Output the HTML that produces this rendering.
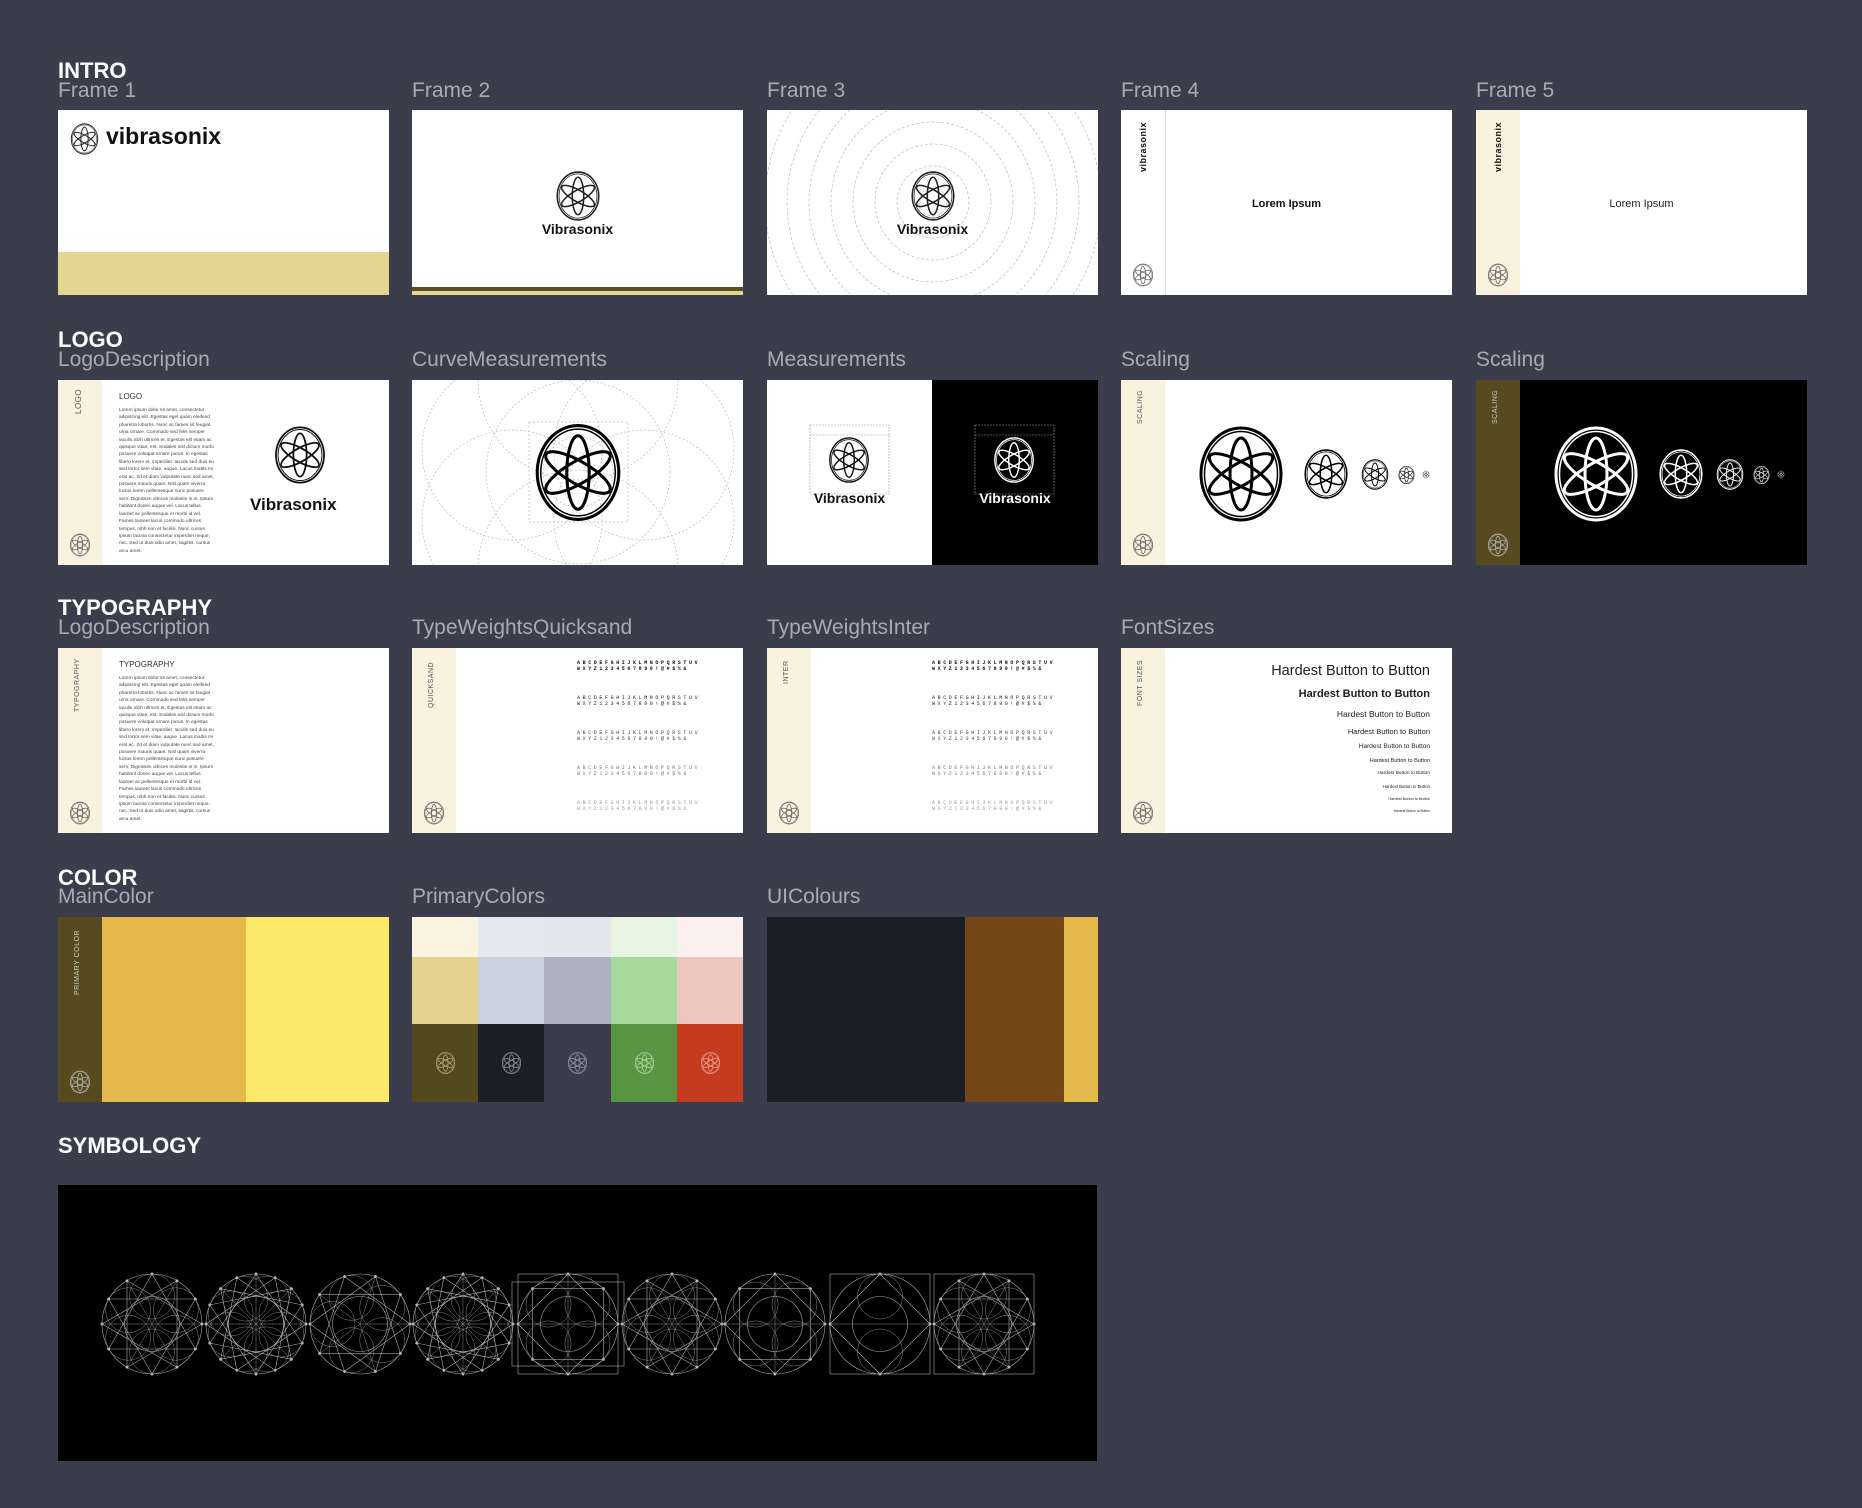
<!DOCTYPE html>
<html><head><meta charset="utf-8">
<style>
*{margin:0;padding:0;box-sizing:border-box}
body{width:1862px;height:1508px;background:#3b3d4c;position:relative;overflow:hidden;font-family:"Liberation Sans",sans-serif}
.t{position:absolute;color:#fff;font-weight:bold;font-size:22px;line-height:22px;left:58px}
.s{position:absolute;color:#a9abb3;font-size:21px;line-height:22px}
.f{position:absolute;width:331px;height:185px;background:#fff;overflow:hidden}
.side{position:absolute;left:0;top:0;width:44px;height:185px;background:#f8f2de}
.vt{position:absolute;transform:rotate(-90deg);transform-origin:left top;font-size:8px;color:#555;white-space:nowrap;letter-spacing:.5px}
.ic{position:absolute}
.para{position:absolute;font-size:4.8px;line-height:7.4px;color:#444;width:96px}
.tw{position:absolute;font-family:"Liberation Mono",monospace;font-size:5px;line-height:6px;letter-spacing:2.6px;color:#333;white-space:nowrap}
.fs{position:absolute;right:22px;white-space:nowrap;color:#222;text-align:right}
</style></head><body>
<svg width="0" height="0" style="position:absolute">
<defs>
<symbol id="lg" viewBox="0 0 100 100">
<g fill="none" stroke="currentColor" stroke-width="3">
<ellipse cx="50" cy="50" rx="40" ry="46"/>
<ellipse cx="50" cy="50" rx="36.5" ry="42.5" stroke-width="1.5"/>
<ellipse cx="50" cy="50" rx="11" ry="36"/>
<ellipse cx="50" cy="50" rx="11" ry="36" transform="rotate(60 50 50)"/>
<ellipse cx="50" cy="50" rx="11" ry="36" transform="rotate(120 50 50)"/>
</g>
</symbol>
</defs>
</svg>

<!-- INTRO -->
<div class="t" style="top:60px">INTRO</div>
<div class="s" style="left:58px;top:80px">Frame 1</div>
<div class="s" style="left:412px;top:80px">Frame 2</div>
<div class="s" style="left:767px;top:80px">Frame 3</div>
<div class="s" style="left:1121px;top:80px">Frame 4</div>
<div class="s" style="left:1476px;top:80px">Frame 5</div>

<div class="f" style="left:58px;top:110px">
<svg class="ic" style="left:10px;top:12px;color:#222" width="33" height="34"><use href="#lg"/></svg>
<div style="position:absolute;left:48px;top:13px;font-size:23px;font-weight:bold;color:#111">vibrasonix</div>
<div style="position:absolute;left:0;bottom:0;width:331px;height:43px;background:#e4d590"></div>
</div>
<div class="f" style="left:412px;top:110px">
<svg class="ic" style="left:140px;top:59px;color:#222" width="52" height="54"><use href="#lg"/></svg>
<div style="position:absolute;left:0;width:331px;top:111px;text-align:center;font-size:14px;font-weight:bold;color:#111">Vibrasonix</div>
<div style="position:absolute;left:0;top:177px;width:331px;height:4px;background:#5a4f23"></div>
<div style="position:absolute;left:0;top:181px;width:331px;height:4px;background:#e4d590"></div>
</div>
<div class="f" style="left:767px;top:110px">
<svg width="331" height="185" style="position:absolute;left:0;top:0"><g fill="none" stroke="#bbb" stroke-width=".7" stroke-dasharray="3 2" id="cc"></g></svg>
<svg class="ic" style="left:140px;top:59px;color:#222" width="52" height="54"><use href="#lg"/></svg>
<div style="position:absolute;left:0;width:331px;top:111px;text-align:center;font-size:14px;font-weight:bold;color:#111">Vibrasonix</div>
</div>
<div class="f" style="left:1121px;top:110px">
<div style="position:absolute;left:44px;top:0;width:1px;height:185px;background:#ddd"></div>
<div class="vt" style="left:17px;top:62px;font-weight:bold;color:#111;font-size:9px">vibrasonix</div>
<svg class="ic" style="left:10px;top:153px;color:#555" width="24" height="24"><use href="#lg"/></svg>
<div style="position:absolute;left:0;width:331px;top:88px;text-align:center;font-size:11px;font-weight:bold;color:#111">Lorem Ipsum</div>
</div>
<div class="f" style="left:1476px;top:110px">
<div class="side"></div>
<div class="vt" style="left:17px;top:62px;font-weight:bold;color:#111;font-size:9px">vibrasonix</div>
<svg class="ic" style="left:10px;top:153px;color:#555" width="24" height="24"><use href="#lg"/></svg>
<div style="position:absolute;left:0;width:331px;top:88px;text-align:center;font-size:11px;color:#222">Lorem Ipsum</div>
</div>

<!-- LOGO -->
<div class="t" style="top:329px">LOGO</div>
<div class="s" style="left:58px;top:349px">LogoDescription</div>
<div class="s" style="left:412px;top:349px">CurveMeasurements</div>
<div class="s" style="left:767px;top:349px">Measurements</div>
<div class="s" style="left:1121px;top:349px">Scaling</div>
<div class="s" style="left:1476px;top:349px">Scaling</div>

<div class="f" style="left:58px;top:380px">
<div class="side"></div>
<div class="vt" style="left:16px;top:34px">LOGO</div>
<svg class="ic" style="left:10px;top:153px;color:#555" width="24" height="24"><use href="#lg"/></svg>
<div style="position:absolute;left:61px;top:12px;font-size:8px;color:#333">LOGO</div>
<div class="para" style="left:61px;top:27px">Lorem ipsum dolor sit amet, consectetur adipiscing elit. Egestas eget quam eleifend pharetra lobortis. Nunc ac fames sit feugiat urna ornare. Commodo sed felis semper iaculis nibh ultrices et. Egestas elit etiam ac quisque vitae, est. Sodales nisl dictum morbi posuere volutpat ornare purus. In egestas libero lorem et, imperdiet. Iaculis sed duis eu sed tortor sem vitae, augue. Lacus mattis mi erat ac. Sit et diam vulputate nunc sed amet, posuere mauris quam. Nisl quam viverra luctus lorem pellentesque nunc posuere sem. Dignissim ultrices molestie in in. Ipsum habitant donec augue vel. Lacus tellus laoreet ac pellentesque et morbi id vel. Fames laoreet lacus commodo ultrices tempus, nibh non et facilisi. Nunc cursus ipsum lacinia consectetur imperdiet neque, nec. Sed ut duis odio amet, sagittis, cursus arcu amet.</div>
<svg class="ic" style="left:212px;top:43px;color:#111" width="60" height="64"><use href="#lg"/></svg>
<div style="position:absolute;left:192px;top:115px;font-size:17px;font-weight:bold;color:#111">Vibrasonix</div>
</div>
<div class="f" style="left:412px;top:380px">
<svg width="331" height="185" style="position:absolute;left:0;top:0"><g fill="none" stroke="#bbb" stroke-width=".7" stroke-dasharray="2 2">
<circle cx="166" cy="92" r="92"/><circle cx="100" cy="70" r="90"/><circle cx="232" cy="70" r="90"/><circle cx="100" cy="140" r="90"/><circle cx="232" cy="140" r="90"/><circle cx="166" cy="0" r="100"/><circle cx="166" cy="190" r="100"/><rect x="117" y="42" width="99" height="100"/><circle cx="166" cy="92" r="35"/></g></svg>
<svg class="ic" style="left:115px;top:40px;color:#000" width="102" height="105"><use href="#lg"/></svg>
</div>
<div class="f" style="left:767px;top:380px">
<div style="position:absolute;left:165px;top:0;width:166px;height:185px;background:#000"></div>
<svg width="331" height="185" style="position:absolute;left:0;top:0"><g fill="none" stroke="#999" stroke-width=".6" stroke-dasharray="2 1"><rect x="43" y="45" width="79" height="69"/><rect x="208" y="45" width="79" height="69"/><line x1="43" y1="55" x2="122" y2="55"/><line x1="208" y1="55" x2="287" y2="55"/></g></svg>
<svg class="ic" style="left:58px;top:55px;color:#111" width="48" height="50"><use href="#lg"/></svg>
<svg class="ic" style="left:223px;top:55px;color:#fff" width="48" height="50"><use href="#lg"/></svg>
<div style="position:absolute;left:0;width:165px;top:110px;text-align:center;font-size:14px;font-weight:bold;color:#111">Vibrasonix</div>
<div style="position:absolute;left:165px;width:166px;top:110px;text-align:center;font-size:14px;font-weight:bold;color:#fff">Vibrasonix</div>
</div>
<div class="f" style="left:1121px;top:380px">
<div class="side"></div>
<div class="vt" style="left:16px;top:44px;font-size:7px">SCALING</div>
<svg class="ic" style="left:10px;top:153px;color:#555" width="24" height="24"><use href="#lg"/></svg>
<svg class="ic" style="left:70px;top:42px;color:#000" width="100" height="104"><use href="#lg"/></svg>
<svg class="ic" style="left:179px;top:67px;color:#000" width="52" height="54"><use href="#lg"/></svg>
<svg class="ic" style="left:238px;top:78px;color:#000" width="32" height="33"><use href="#lg"/></svg>
<svg class="ic" style="left:276px;top:85px;color:#000" width="19" height="20"><use href="#lg"/></svg>
<svg class="ic" style="left:301px;top:90px;color:#000" width="8" height="9"><use href="#lg"/></svg>
</div>
<div class="f" style="left:1476px;top:380px;background:#000">
<div class="side" style="background:#564a1e"></div>
<div class="vt" style="left:16px;top:44px;font-size:7px;color:#ccc">SCALING</div>
<svg class="ic" style="left:10px;top:153px;color:#bbb" width="24" height="24"><use href="#lg"/></svg>
<svg class="ic" style="left:70px;top:42px;color:#fff" width="100" height="104"><use href="#lg"/></svg>
<svg class="ic" style="left:179px;top:67px;color:#fff" width="52" height="54"><use href="#lg"/></svg>
<svg class="ic" style="left:238px;top:78px;color:#fff" width="32" height="33"><use href="#lg"/></svg>
<svg class="ic" style="left:276px;top:85px;color:#fff" width="19" height="20"><use href="#lg"/></svg>
<svg class="ic" style="left:301px;top:90px;color:#fff" width="8" height="9"><use href="#lg"/></svg>
</div>

<!-- TYPOGRAPHY -->
<div class="t" style="top:597px">TYPOGRAPHY</div>
<div class="s" style="left:58px;top:617px">LogoDescription</div>
<div class="s" style="left:412px;top:617px">TypeWeightsQuicksand</div>
<div class="s" style="left:767px;top:617px">TypeWeightsInter</div>
<div class="s" style="left:1121px;top:617px">FontSizes</div>

<div class="f" style="left:58px;top:648px">
<div class="side"></div>
<div class="vt" style="left:16px;top:64px;font-size:7px">TYPOGRAPHY</div>
<svg class="ic" style="left:10px;top:153px;color:#555" width="24" height="24"><use href="#lg"/></svg>
<div style="position:absolute;left:61px;top:12px;font-size:8px;color:#333">TYPOGRAPHY</div>
<div class="para" style="left:61px;top:27px">Lorem ipsum dolor sit amet, consectetur adipiscing elit. Egestas eget quam eleifend pharetra lobortis. Nunc ac fames sit feugiat urna ornare. Commodo sed felis semper iaculis nibh ultrices et. Egestas elit etiam ac quisque vitae, est. Sodales nisl dictum morbi posuere volutpat ornare purus. In egestas libero lorem et, imperdiet. Iaculis sed duis eu sed tortor sem vitae, augue. Lacus mattis mi erat ac. Sit et diam vulputate nunc sed amet, posuere mauris quam. Nisl quam viverra luctus lorem pellentesque nunc posuere sem. Dignissim ultrices molestie in in. Ipsum habitant donec augue vel. Lacus tellus laoreet ac pellentesque et morbi id vel. Fames laoreet lacus commodo ultrices tempus, nibh non et facilisi. Nunc cursus ipsum lacinia consectetur imperdiet neque, nec. Sed ut duis odio amet, sagittis, cursus arcu amet.</div>
</div>
<div class="f" style="left:412px;top:648px">
<div class="side"></div>
<div class="vt" style="left:16px;top:60px;font-size:7px">QUICKSAND</div>
<svg class="ic" style="left:10px;top:153px;color:#555" width="24" height="24"><use href="#lg"/></svg>
<div class="tw" style="left:165px;top:12px;font-weight:bold;color:#111">ABCDEFGHIJKLMNOPQRSTUV<br>WXYZ1234567890!@#$%&amp;</div>
<div class="tw" style="left:165px;top:47px;color:#222">ABCDEFGHIJKLMNOPQRSTUV<br>WXYZ1234567890!@#$%&amp;</div>
<div class="tw" style="left:165px;top:82px;color:#444">ABCDEFGHIJKLMNOPQRSTUV<br>WXYZ1234567890!@#$%&amp;</div>
<div class="tw" style="left:165px;top:117px;color:#777">ABCDEFGHIJKLMNOPQRSTUV<br>WXYZ1234567890!@#$%&amp;</div>
<div class="tw" style="left:165px;top:152px;color:#999">ABCDEFGHIJKLMNOPQRSTUV<br>WXYZ1234567890!@#$%&amp;</div>
</div>
<div class="f" style="left:767px;top:648px">
<div class="side"></div>
<div class="vt" style="left:16px;top:36px;font-size:7px">INTER</div>
<svg class="ic" style="left:10px;top:153px;color:#555" width="24" height="24"><use href="#lg"/></svg>
<div class="tw" style="left:165px;top:12px;font-weight:bold;color:#111">ABCDEFGHIJKLMNOPQRSTUV<br>WXYZ1234567890!@#$%&amp;</div>
<div class="tw" style="left:165px;top:47px;color:#222">ABCDEFGHIJKLMNOPQRSTUV<br>WXYZ1234567890!@#$%&amp;</div>
<div class="tw" style="left:165px;top:82px;color:#444">ABCDEFGHIJKLMNOPQRSTUV<br>WXYZ1234567890!@#$%&amp;</div>
<div class="tw" style="left:165px;top:117px;color:#777">ABCDEFGHIJKLMNOPQRSTUV<br>WXYZ1234567890!@#$%&amp;</div>
<div class="tw" style="left:165px;top:152px;color:#999">ABCDEFGHIJKLMNOPQRSTUV<br>WXYZ1234567890!@#$%&amp;</div>
</div>
<div class="f" style="left:1121px;top:648px">
<div class="side"></div>
<div class="vt" style="left:16px;top:58px;font-size:7px">FONT SIZES</div>
<svg class="ic" style="left:10px;top:153px;color:#555" width="24" height="24"><use href="#lg"/></svg>
<div class="fs" style="top:15px;font-size:14.5px">Hardest Button to Button</div>
<div class="fs" style="top:40px;font-size:11px;font-weight:bold">Hardest Button to Button</div>
<div class="fs" style="top:61px;font-size:8.5px">Hardest Button to Button</div>
<div class="fs" style="top:79px;font-size:7.5px">Hardest Button to Button</div>
<div class="fs" style="top:95px;font-size:6.5px">Hardest Button to Button</div>
<div class="fs" style="top:110px;font-size:5.5px">Hardest Button to Button</div>
<div class="fs" style="top:123px;font-size:4.8px">Hardest Button to Button</div>
<div class="fs" style="top:136px;font-size:4.3px">Hardest Button to Button</div>
<div class="fs" style="top:149px;font-size:3.8px">Hardest Button to Button</div>
<div class="fs" style="top:161px;font-size:3.3px">Hardest Button to Button</div>
</div>

<!-- COLOR -->
<div class="t" style="top:867px">COLOR</div>
<div class="s" style="left:58px;top:886px">MainColor</div>
<div class="s" style="left:412px;top:886px">PrimaryColors</div>
<div class="s" style="left:767px;top:886px">UIColours</div>

<div class="f" style="left:58px;top:917px;background:#fce96c">
<div class="side" style="background:#564a1e"></div>
<div class="vt" style="left:16px;top:78px;font-size:7px;color:#ccc">PRIMARY COLOR</div>
<svg class="ic" style="left:10px;top:153px;color:#bbb" width="24" height="24"><use href="#lg"/></svg>
<div style="position:absolute;left:44px;top:0;width:144px;height:185px;background:#e4b84a"></div>
</div>
<div class="f" style="left:412px;top:917px;display:flex">
<div style="width:66px"><div style="height:40px;background:#faf3df"></div><div style="height:67px;background:#e4d38f"></div><div style="height:78px;background:#54491e;position:relative"><svg class="ic" style="left:22px;top:27px;color:#b8ad80" width="23" height="24"><use href="#lg"/></svg></div></div>
<div style="width:66px"><div style="height:40px;background:#e4e8f0"></div><div style="height:67px;background:#c8d3df"></div><div style="height:78px;background:#191f27;position:relative"><svg class="ic" style="left:22px;top:27px;color:#99a" width="23" height="24"><use href="#lg"/></svg></div></div>
<div style="width:67px"><div style="height:40px;background:#e6e7ec"></div><div style="height:67px;background:#aeb1c0"></div><div style="height:78px;background:#3b3d4c;position:relative"><svg class="ic" style="left:22px;top:27px;color:#99a" width="23" height="24"><use href="#lg"/></svg></div></div>
<div style="width:66px"><div style="height:40px;background:#e6f4e1"></div><div style="height:67px;background:#a7d89c"></div><div style="height:78px;background:#579543;position:relative"><svg class="ic" style="left:22px;top:27px;color:#b5d8a8" width="23" height="24"><use href="#lg"/></svg></div></div>
<div style="width:66px"><div style="height:40px;background:#fcf1ee"></div><div style="height:67px;background:#ecc7bf"></div><div style="height:78px;background:#c43b1e;position:relative"><svg class="ic" style="left:22px;top:27px;color:#eaa898" width="23" height="24"><use href="#lg"/></svg></div></div>
</div>
<div class="f" style="left:767px;top:917px;background:#191f27">
<div style="position:absolute;left:198px;top:0;width:99px;height:185px;background:#744719"></div>
<div style="position:absolute;left:297px;top:0;width:34px;height:185px;background:#e4b84a"></div>
</div>

<!-- SYMBOLOGY -->
<div class="t" style="top:1135px">SYMBOLOGY</div>
<div style="position:absolute;left:58px;top:1185px;width:1039px;height:276px;background:#000">
<svg width="1039" height="276" id="sym" style="position:absolute;left:0;top:0"></svg>
</div>

<script>
(function(){
var ns="http://www.w3.org/2000/svg";
function el(p,t,a){var e=document.createElementNS(ns,t);for(var k in a)e.setAttribute(k,a[k]);p.appendChild(e);return e;}
var cc=document.getElementById("cc");
for(var r=14;r<=200;r+=22)el(cc,"circle",{cx:166,cy:92,r:r});
var s=document.getElementById("sym");
var cxs=[94,198,302,405,510,614,717,822,926],cy=139,R=50;
cxs.forEach(function(cx,i){
 var g=el(s,"g",{fill:"none",stroke:"#aaa","stroke-width":"0.6"});
 var n=[12,16,10,16,8,12,8,4,12][i];
 el(g,"circle",{cx:cx,cy:cy,r:R});
 el(g,"circle",{cx:cx,cy:cy,r:R*0.55});
 if(i==4||i==7||i==8){el(g,"rect",{x:cx-R,y:cy-R,width:2*R,height:2*R});}
 if(i==4){el(g,"rect",{x:cx-R-6,y:cy-R+8,width:2*R+12,height:2*R-16});}
 var pts=[];
 for(var k=0;k<n;k++){var a=2*Math.PI*k/n;pts.push([cx+R*Math.cos(a),cy+R*Math.sin(a)]);}
 for(var k=0;k<n;k++){
  var p=pts[k],q=pts[(k+Math.floor(n/3))%n];
  el(g,"line",{x1:p[0],y1:p[1],x2:q[0],y2:q[1]});
  if(k%2==0)el(g,"line",{x1:cx,y1:cy,x2:p[0],y2:p[1],"stroke-width":"0.4"});
  el(g,"circle",{cx:p[0],cy:p[1],r:1.2,fill:"#bbb"});
  if(k%2==1)el(g,"circle",{cx:cx+R*0.55*Math.cos(2*Math.PI*k/n),cy:cy+R*0.55*Math.sin(2*Math.PI*k/n),r:R*0.45,"stroke-width":"0.4"});
 }
});
})();
</script>
</body></html>
